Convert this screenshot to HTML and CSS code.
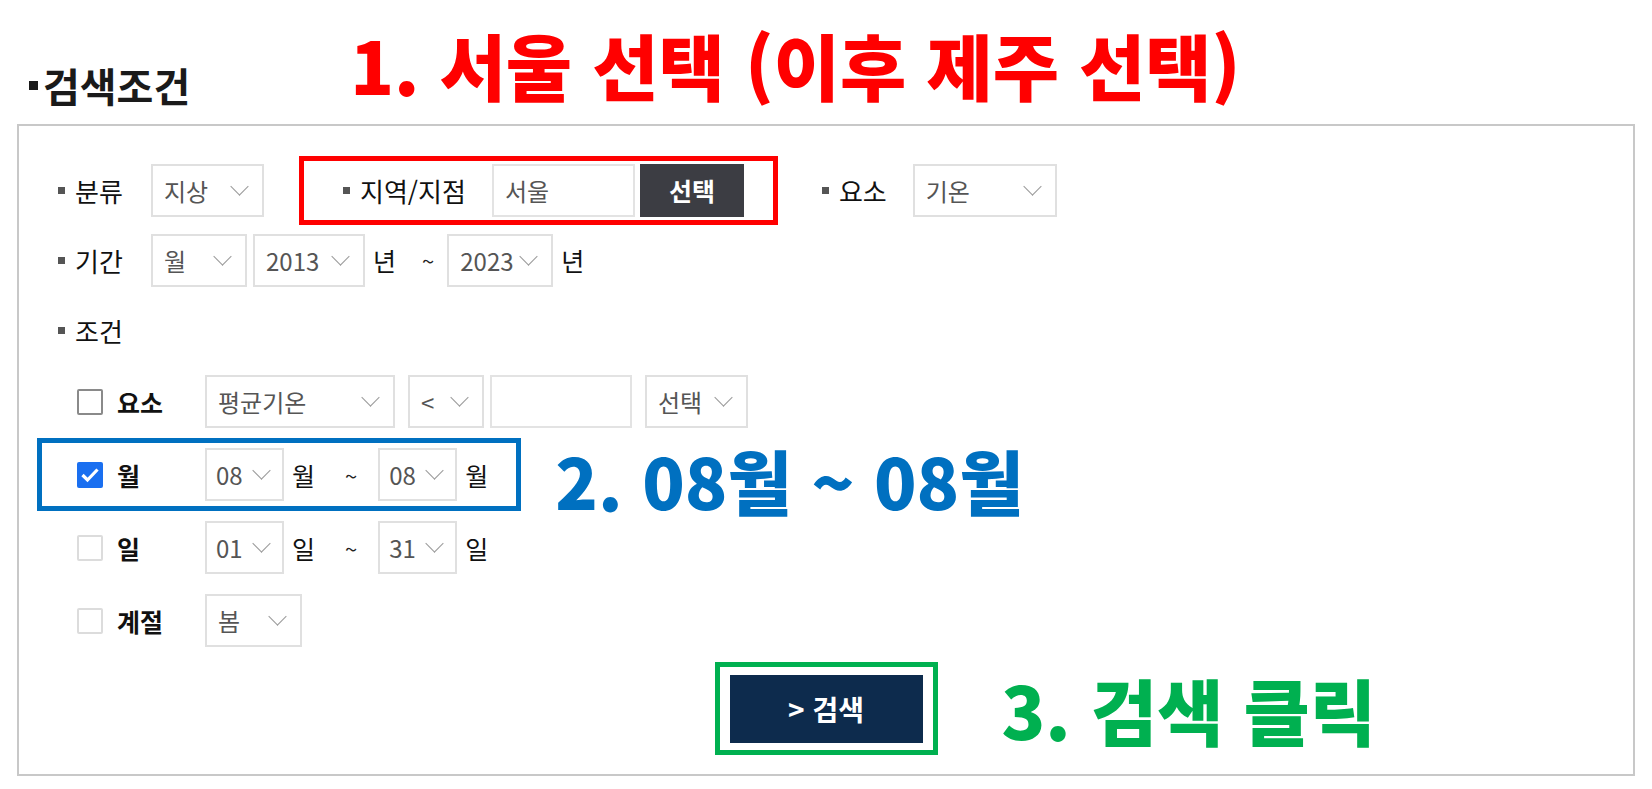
FILE: index.html
```html
<!DOCTYPE html>
<html lang="ko">
<head>
    <meta charset="UTF-8">
    <meta name="viewport" content="width=device-width, initial-scale=1.0">
    <title>검색조건</title>
    <link rel="stylesheet" href="styles.css">
</head>
<body>
    <div class="page">
        <div class="head">
            <h2 class="title">검색조건</h2>
            <p class="note note-red">1. 서울 선택 (이후 제주 선택)</p>
        </div>

        <div class="panel">
            <!-- 분류 / 지역 / 요소 -->
            <div class="row">
                <span class="label">분류</span>
                <div class="sel w-type">지상</div>
                <div class="mark-red">
                    <span class="label label-auto">지역/지점</span>
                    <div class="input w-area">서울</div>
                    <button class="btn-dark">선택</button>
                </div>
                <span class="label label-auto gap-elem">요소</span>
                <div class="sel w-elem">기온</div>
            </div>

            <!-- 기간 -->
            <div class="row">
                <span class="label">기간</span>
                <div class="sel w-unit">월</div>
                <div class="sel w-year ml-6">2013</div>
                <span class="unit">년</span>
                <span class="tilde">~</span>
                <div class="sel w-year2">2023</div>
                <span class="unit">년</span>
            </div>

            <!-- 조건 -->
            <div class="row">
                <span class="label">조건</span>
            </div>

            <div class="cond">
                <span class="check dark"></span>
                <span class="cond-label">요소</span>
                <div class="sel w-avg">평균기온</div>
                <div class="sel w-op ml-13">&lt;</div>
                <div class="input w-val ml-6"></div>
                <div class="sel w-pick ml-13">선택</div>
            </div>

            <div class="cond-line">
                <div class="cond mark-blue">
                    <span class="check checked">
                        <svg width="26" height="26" viewBox="0 0 26 26"><polyline points="5.5,13 10.5,18 20.5,7.5" fill="none" stroke="#fff" stroke-width="3.2"/></svg>
                    </span>
                    <span class="cond-label">월</span>
                    <div class="sel w-num">08</div>
                    <span class="unit">월</span>
                    <span class="tilde">~</span>
                    <div class="sel w-num">08</div>
                    <span class="unit">월</span>
                </div>
                <p class="note note-blue">2. 08월 ~ 08월</p>
            </div>

            <div class="cond">
                <span class="check"></span>
                <span class="cond-label">일</span>
                <div class="sel w-num">01</div>
                <span class="unit">일</span>
                <span class="tilde">~</span>
                <div class="sel w-num">31</div>
                <span class="unit">일</span>
            </div>

            <div class="cond">
                <span class="check"></span>
                <span class="cond-label">계절</span>
                <div class="sel w-season">봄</div>
            </div>

            <div class="search-wrap">
                <div class="mark-green">
                    <button class="btn-search">&gt; 검색</button>
                </div>
                <p class="note note-green">3. 검색 클릭</p>
            </div>
        </div>
    </div>
</body>
</html>
```

FILE: styles.css
```css
/* Base */
body {
    margin: 0;
    background: #fff;
    color: #222;
    font-family: "Noto Sans CJK KR", "Noto Sans", sans-serif;
}

.page {
    padding: 0 17px 13px 17px;
}

/* Heading line with the red note */
.head {
    display: flex;
    align-items: flex-start;
    height: 124px;
    box-sizing: border-box;
    padding: 28px 0 0 12px;
}

.title {
    display: flex;
    align-items: center;
    margin: 37px 0 0 0;
    font-size: 40px;
    line-height: 1;
    font-weight: 700;
    color: #1a1a1a;
}

.title::before {
    content: "";
    width: 9px;
    height: 9px;
    background: #1a1a1a;
    margin-right: 5px;
}

/* Annotation texts */
.note {
    margin: 0;
    line-height: 1;
    font-weight: 900;
    white-space: nowrap;
}

.note-red {
    margin-left: 160px;
    font-size: 72px;
    color: #ff0000;
}

.note-blue {
    margin: 10px 0 0 34px;
    font-size: 70px;
    color: #0070c0;
}

.note-green {
    margin-left: 64px;
    font-size: 72px;
    color: #00b050;
}

/* Panel */
.panel {
    border: 2px solid #c8c8c8;
    padding: 29px 39px 19px 39px;
}

.row {
    display: flex;
    align-items: center;
    height: 70px;
}

.label {
    display: flex;
    align-items: center;
    width: 93px;
    font-size: 26px;
    font-weight: 400;
    color: #111;
}

.label::before {
    content: "";
    width: 7px;
    height: 7px;
    background: #555;
    margin-right: 10px;
}

.label-auto {
    width: auto;
    margin-right: 26px;
}

.gap-elem {
    margin-left: 44px;
}

/* Select boxes */
.sel {
    display: flex;
    align-items: center;
    justify-content: space-between;
    height: 53px;
    box-sizing: border-box;
    border: 2px solid #e0e0e0;
    padding: 0 16px 0 11px;
    font-size: 24px;
    color: #555;
    background: #fff;
}

.sel::after {
    content: "";
    width: 12px;
    height: 12px;
    border-right: 1.5px solid #999;
    border-bottom: 1.5px solid #999;
    transform: rotate(45deg);
    margin-top: -8px;
    flex-shrink: 0;
}

.input {
    display: flex;
    align-items: center;
    height: 53px;
    box-sizing: border-box;
    border: 2px solid #e3e3e3;
    padding: 0 11px;
    font-size: 24px;
    color: #555;
}

.w-type { width: 113px; }
.w-elem { width: 144px; }
.w-unit { width: 96px; }
.w-year { width: 112px; }
.w-year2 { width: 106px; }
.w-avg { width: 190px; }
.w-op { width: 76px; }
.w-val { width: 142px; }
.w-pick { width: 103px; }
.w-num { width: 79px; padding-right: 14px; padding-left: 9px; }
.w-season { width: 97px; }
.w-area { width: 143px; }

.ml-6 { margin-left: 6px; }
.ml-13 { margin-left: 13px; }

.unit {
    padding: 0 8px;
    font-size: 25px;
    color: #111;
}

.tilde {
    padding: 0 13px 0 18px;
    font-size: 22px;
    color: #222;
}

.cond .tilde {
    padding: 0 21px 0 22px;
}

/* Buttons */
.btn-dark {
    height: 53px;
    width: 104px;
    margin-left: 5px;
    border: none;
    background: #3c3d43;
    color: #fff;
    font-family: inherit;
    font-size: 25px;
    font-weight: 700;
}

.btn-search {
    width: 193px;
    height: 68px;
    border: none;
    background: #0d2b4d;
    color: #fff;
    font-family: inherit;
    font-size: 28px;
    font-weight: 700;
}

/* Annotation boxes */
.mark-red {
    display: flex;
    align-items: center;
    margin-left: 35px;
    padding: 3px 29px 3px 39px;
    border: 5px solid #ff0000;
}

.mark-green {
    padding: 8px 10px 7px 10px;
    border: 5px solid #00b050;
}

/* Condition rows */
.cond {
    display: flex;
    align-items: center;
    height: 73px;
    box-sizing: border-box;
    margin-left: -21px;
    padding-left: 40px;
}

.cond.mark-blue {
    border: 5px solid #0070c0;
    padding-left: 35px;
    padding-right: 20px;
    flex-shrink: 0;
}

.cond-line {
    display: flex;
    align-items: center;
    height: 73px;
}

.check {
    width: 26px;
    height: 26px;
    box-sizing: border-box;
    border: 2px solid #dcdcdc;
    border-radius: 2px;
    margin-right: 14px;
}

.check.dark {
    border-color: #8a8a8a;
}

.check.checked {
    border: none;
    background: #1a6ff0;
}

.check svg {
    display: block;
}

.cond-label {
    width: 88px;
    font-size: 25px;
    font-weight: 700;
    color: #111;
}

/* Search button */
.search-wrap {
    display: grid;
    grid-template-columns: 1fr auto 1fr;
    align-items: center;
    margin-top: 5px;
}

.search-wrap .mark-green {
    grid-column: 2;
}
```
